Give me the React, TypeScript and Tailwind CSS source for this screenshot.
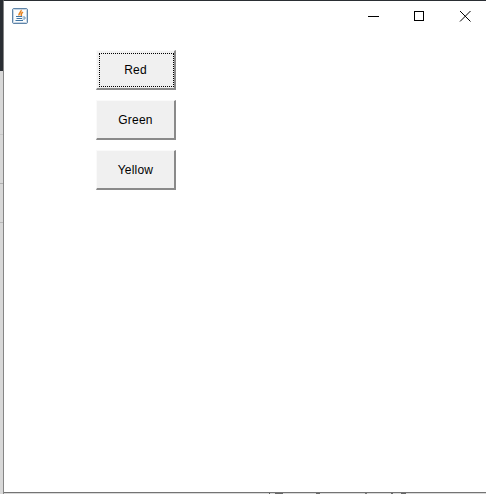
const JavaIcon = () => (
  <svg width="17" height="16" viewBox="0 0 17 16" fill="none">
    <rect x="0.5" y="0.5" width="15" height="15" rx="1.5" fill="#eef3f8" stroke="#5f84a8" />
    <rect x="1.5" y="1.5" width="13" height="13" rx="1" fill="#fbfcfd" stroke="#c5d5e4" />
    <path d="M9 2C10 3.5 6.5 5 7 7.5M11 4C9.5 5 8.5 6 9.5 8" stroke="#e8821e" strokeWidth="1.5" />
    <path d="M4 8.5H10M4.5 10.5H10M3.5 12.5H11" stroke="#3f74a3" strokeWidth="1" />
    <path d="M10.5 9H13V11H10.5" stroke="#6f97bb" strokeWidth="1" />
  </svg>
)

const WindowControls = () => (
  <div className="flex items-center">
    <svg width="46" height="30" viewBox="0 0 46 30">
      <path d="M18 15.5H29" stroke="#000" strokeWidth="1" />
    </svg>
    <svg width="46" height="30" viewBox="0 0 46 30">
      <rect x="18.5" y="10.5" width="9" height="9" fill="none" stroke="#000" strokeWidth="1" />
    </svg>
    <svg width="44" height="30" viewBox="0 0 44 30">
      <path d="M18 10L28.5 20.5M28.5 10L18 20.5" stroke="#000" strokeWidth="1" />
    </svg>
  </div>
)

const SwingButton = ({ label, focused }: { label: string; focused?: boolean }) => (
  <button className="w-20 h-10 pl-[2px] pt-[2px] pb-px flex bg-[#f0f0f0] border-t border-l border-t-[#fafafa] border-l-[#fafafa] border-r-2 border-b-2 border-r-[#8a8a8a] border-b-[#8a8a8a] text-[12px] tracking-[0.2px] text-black">
    <span
      className={
        focused
          ? 'flex-1 flex items-center justify-center pr-[2px] border border-dotted border-black'
          : 'flex-1 flex items-center justify-center pr-[2px] border border-transparent'
      }
    >
      {label}
    </span>
  </button>
)

const App = () => {
  return (
    <div className="w-[486px] h-[494px] flex overflow-hidden bg-white font-['Liberation_Sans',Arial,sans-serif]">
      <div className="w-[3px] flex flex-col bg-[#d8d8d8]">
        <div className="h-[71px] bg-[#2a2e33]"></div>
        <div className="h-px mt-[63px] bg-[#c8c8c8]"></div>
        <div className="h-px mt-[48px] bg-[#b0b0b0]"></div>
        <div className="h-px mt-[38px] bg-[#b8b8b8]"></div>
      </div>
      <div className="flex-1 flex flex-col border-t border-t-[#2a2e33] border-l border-l-[#858585]">
        <div className="h-[29px] flex items-center justify-between pl-2">
          <JavaIcon />
          <WindowControls />
        </div>
        <div className="flex-1 flex flex-col items-start gap-[10px] pt-5 pl-[92px]">
          <SwingButton label="Red" focused />
          <SwingButton label="Green" />
          <SwingButton label="Yellow" />
        </div>
        <div className="h-px bg-[#747474]"></div>
        <div className="h-px flex bg-[#d9d9d9]">
          <div className="w-px ml-[265px] bg-[#555]"></div>
          <div className="w-2 ml-[5px] bg-[#666]"></div>
          <div className="w-1 ml-[33px] bg-[#666]"></div>
          <div className="w-[2px] ml-[45px] bg-[#777]"></div>
          <div className="w-[2px] ml-6 bg-[#666]"></div>
          <div className="w-[5px] ml-2 bg-[#666]"></div>
        </div>
      </div>
    </div>
  )
}

export default App
